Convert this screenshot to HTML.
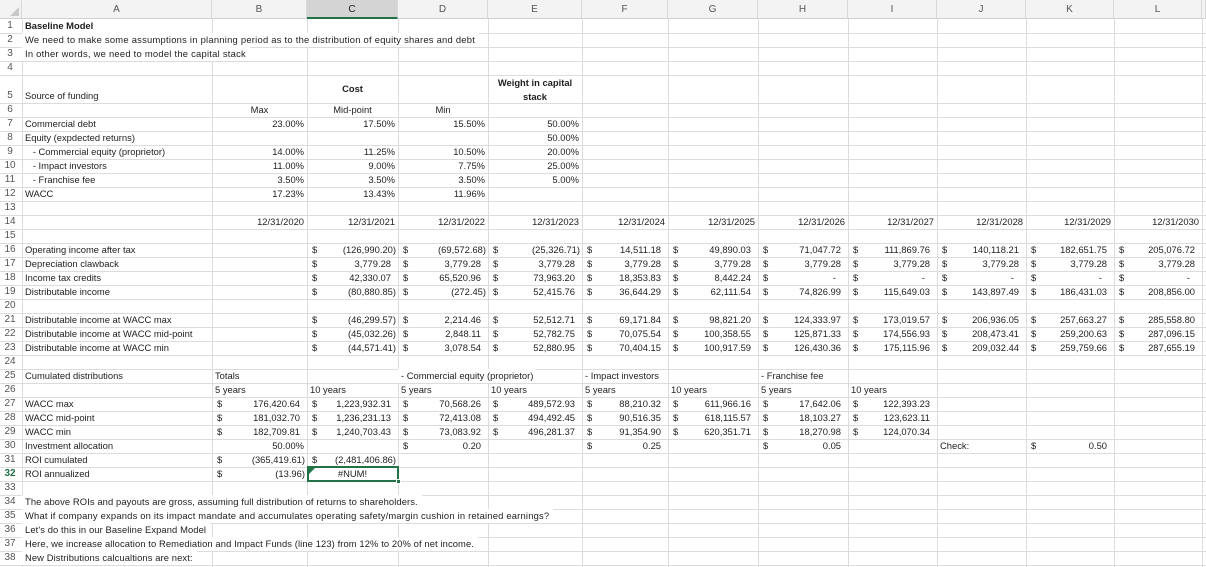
<!DOCTYPE html>
<html><head><meta charset="utf-8">
<style>
*{margin:0;padding:0;box-sizing:border-box}
body{width:1206px;height:567px;overflow:hidden;background:#fff;position:relative;font-family:"Liberation Sans",Arial,sans-serif;font-size:9.4px;color:#1e1e1e}
.h{position:absolute;left:0;width:1206px;height:1px;background:#dcdcdc}
.v{position:absolute;top:19px;height:548px;width:1px;background:#dcdcdc}
.hd{position:absolute;top:0;height:19px;background:#f3f3f3;border-right:1px solid #d8d8d8;border-bottom:1px solid #d0d0d0;text-align:center;line-height:19px;font-size:10px;color:#555}
.rn{position:absolute;left:0;width:20px;text-align:center;height:14px;line-height:14px;font-size:10px;color:#555}
.c{position:absolute;height:14px;line-height:14px;white-space:nowrap}
.A{left:22px;width:190px;padding-left:3px}
.B{left:212px;width:95px}.C{left:307px;width:91px}.D{left:398px;width:90px}.E{left:488px;width:94px}
.F{left:582px;width:86px}.G{left:668px;width:90px}.H{left:758px;width:90px}.I{left:848px;width:89px}
.J{left:937px;width:89px}.K{left:1026px;width:88px}.L{left:1114px;width:88px}
.R{text-align:right;padding-right:3px}
.Ct{text-align:center}
.Lt{padding-left:3px}
.a{text-align:right;padding-right:7px}
.a.n{padding-right:2px}
.a.z{padding-right:12px}
.a s{position:absolute;left:5px;text-decoration:none}
.w{background:#fff}
.r1{top:19px}.r2{top:33px}.r3{top:47px}.r4{top:61px}
.r6{top:103px}.r7{top:117px}.r8{top:131px}.r9{top:145px}.r10{top:159px}.r11{top:173px}.r12{top:187px}
.r14{top:215px}.r16{top:243px}.r17{top:257px}.r18{top:271px}.r19{top:285px}
.r21{top:313px}.r22{top:327px}.r23{top:341px}.r25{top:369px}.r26{top:383px}.r27{top:397px}.r28{top:411px}
.r29{top:425px}.r30{top:439px}.r31{top:453px}.r32{top:467px}.r34{top:495px}.r35{top:509px}.r36{top:523px}.r37{top:537px}.r38{top:551px}
</style></head><body>
<div class="h" style="top:33px"></div><div class="h" style="top:47px"></div><div class="h" style="top:61px"></div><div class="h" style="top:75px"></div><div class="h" style="top:103px"></div>
<div class="h" style="top:117px"></div><div class="h" style="top:131px"></div><div class="h" style="top:145px"></div><div class="h" style="top:159px"></div><div class="h" style="top:173px"></div><div class="h" style="top:187px"></div><div class="h" style="top:201px"></div><div class="h" style="top:215px"></div><div class="h" style="top:229px"></div><div class="h" style="top:243px"></div><div class="h" style="top:257px"></div><div class="h" style="top:271px"></div><div class="h" style="top:285px"></div><div class="h" style="top:299px"></div><div class="h" style="top:313px"></div><div class="h" style="top:327px"></div><div class="h" style="top:341px"></div><div class="h" style="top:355px"></div><div class="h" style="top:369px"></div><div class="h" style="top:383px"></div><div class="h" style="top:397px"></div><div class="h" style="top:411px"></div><div class="h" style="top:425px"></div><div class="h" style="top:439px"></div><div class="h" style="top:453px"></div><div class="h" style="top:467px"></div><div class="h" style="top:481px"></div><div class="h" style="top:495px"></div><div class="h" style="top:509px"></div><div class="h" style="top:523px"></div><div class="h" style="top:537px"></div><div class="h" style="top:551px"></div><div class="h" style="top:565px"></div>
<div class="v" style="left:22px"></div><div class="v" style="left:212px"></div><div class="v" style="left:307px"></div><div class="v" style="left:398px"></div><div class="v" style="left:488px"></div><div class="v" style="left:582px"></div><div class="v" style="left:668px"></div><div class="v" style="left:758px"></div><div class="v" style="left:848px"></div><div class="v" style="left:937px"></div><div class="v" style="left:1026px"></div><div class="v" style="left:1114px"></div><div class="v" style="left:1202px"></div>
<div class="hd" style="left:0;width:22px"><div style="position:absolute;right:2px;bottom:2px;width:0;height:0;border-left:9px solid transparent;border-bottom:9px solid #c8c8c8"></div></div>
<div class="hd" style="left:22px;width:190px">A</div><div class="hd" style="left:212px;width:95px">B</div>
<div class="hd" style="left:307px;width:91px;background:#d4d4d4;border-bottom:2px solid #217346;color:#222">C</div>
<div class="hd" style="left:398px;width:90px">D</div><div class="hd" style="left:488px;width:94px">E</div><div class="hd" style="left:582px;width:86px">F</div><div class="hd" style="left:668px;width:90px">G</div><div class="hd" style="left:758px;width:90px">H</div><div class="hd" style="left:848px;width:89px">I</div><div class="hd" style="left:937px;width:89px">J</div><div class="hd" style="left:1026px;width:88px">K</div><div class="hd" style="left:1114px;width:88px">L</div><div class="hd" style="left:1202px;width:4px"></div>
<div class="rn r1">1</div><div class="rn r2">2</div><div class="rn r3">3</div><div class="rn r4">4</div><div class="rn" style="top:89px">5</div>
<div class="rn r6">6</div><div class="rn r7">7</div><div class="rn r8">8</div><div class="rn r9">9</div><div class="rn r10">10</div><div class="rn r11">11</div><div class="rn r12">12</div><div class="rn" style="top:201px">13</div><div class="rn r14">14</div><div class="rn" style="top:229px">15</div><div class="rn r16">16</div><div class="rn r17">17</div><div class="rn r18">18</div><div class="rn r19">19</div><div class="rn" style="top:299px">20</div><div class="rn r21">21</div><div class="rn r22">22</div><div class="rn r23">23</div><div class="rn" style="top:355px">24</div><div class="rn r25">25</div><div class="rn r26">26</div><div class="rn r27">27</div><div class="rn r28">28</div><div class="rn r29">29</div><div class="rn r30">30</div><div class="rn r31">31</div><div class="rn r32" style="color:#217346;font-weight:bold">32</div><div class="rn" style="top:481px">33</div><div class="rn r34">34</div><div class="rn r35">35</div><div class="rn r36">36</div><div class="rn r37">37</div><div class="rn r38">38</div>
<div class="c A r1" style="font-weight:bold">Baseline Model</div>
<div class="c A r2 w" style="width:auto;padding-right:4px;letter-spacing:0.25px">We need to make some assumptions in planning period as to the distribution of equity shares and debt</div>
<div class="c A r3 w" style="width:auto;padding-right:4px;letter-spacing:0.25px">In other words, we need to model the capital stack</div>
<div class="c A" style="top:89px">Source of funding</div>
<div class="c C Ct" style="top:82px;font-weight:bold">Cost</div>
<div class="c E Ct" style="top:76px;font-weight:bold">Weight in capital</div>
<div class="c E Ct" style="top:90px;font-weight:bold">stack</div>
<div class="c B Ct r6">Max</div><div class="c C Ct r6">Mid-point</div><div class="c D Ct r6">Min</div>
<div class="c A r7">Commercial debt</div><div class="c B R r7">23.00%</div><div class="c C R r7">17.50%</div><div class="c D R r7">15.50%</div><div class="c E R r7">50.00%</div>
<div class="c A r8">Equity (expdected returns)</div><div class="c E R r8">50.00%</div>
<div class="c A r9">&nbsp;&nbsp;&nbsp;- Commercial equity (proprietor)</div><div class="c B R r9">14.00%</div><div class="c C R r9">11.25%</div><div class="c D R r9">10.50%</div><div class="c E R r9">20.00%</div>
<div class="c A r10">&nbsp;&nbsp;&nbsp;- Impact investors</div><div class="c B R r10">11.00%</div><div class="c C R r10">9.00%</div><div class="c D R r10">7.75%</div><div class="c E R r10">25.00%</div>
<div class="c A r11">&nbsp;&nbsp;&nbsp;- Franchise fee</div><div class="c B R r11">3.50%</div><div class="c C R r11">3.50%</div><div class="c D R r11">3.50%</div><div class="c E R r11">5.00%</div>
<div class="c A r12">WACC</div><div class="c B R r12">17.23%</div><div class="c C R r12">13.43%</div><div class="c D R r12">11.96%</div>
<div class="c B R r14">12/31/2020</div><div class="c C R r14">12/31/2021</div><div class="c D R r14">12/31/2022</div><div class="c E R r14">12/31/2023</div><div class="c F R r14">12/31/2024</div><div class="c G R r14">12/31/2025</div><div class="c H R r14">12/31/2026</div><div class="c I R r14">12/31/2027</div><div class="c J R r14">12/31/2028</div><div class="c K R r14">12/31/2029</div><div class="c L R r14">12/31/2030</div>
<div class="c A r16">Operating income after tax</div>
<div class="c C a n r16"><s>$</s>(126,990.20)</div><div class="c D a n r16"><s>$</s>(69,572.68)</div><div class="c E a n r16"><s>$</s>(25,326.71)</div><div class="c F a r16"><s>$</s>14,511.18</div><div class="c G a r16"><s>$</s>49,890.03</div><div class="c H a r16"><s>$</s>71,047.72</div><div class="c I a r16"><s>$</s>111,869.76</div><div class="c J a r16"><s>$</s>140,118.21</div><div class="c K a r16"><s>$</s>182,651.75</div><div class="c L a r16"><s>$</s>205,076.72</div>
<div class="c A r17">Depreciation clawback</div>
<div class="c C a r17"><s>$</s>3,779.28</div><div class="c D a r17"><s>$</s>3,779.28</div><div class="c E a r17"><s>$</s>3,779.28</div><div class="c F a r17"><s>$</s>3,779.28</div><div class="c G a r17"><s>$</s>3,779.28</div><div class="c H a r17"><s>$</s>3,779.28</div><div class="c I a r17"><s>$</s>3,779.28</div><div class="c J a r17"><s>$</s>3,779.28</div><div class="c K a r17"><s>$</s>3,779.28</div><div class="c L a r17"><s>$</s>3,779.28</div>
<div class="c A r18">Income tax credits</div>
<div class="c C a r18"><s>$</s>42,330.07</div><div class="c D a r18"><s>$</s>65,520.96</div><div class="c E a r18"><s>$</s>73,963.20</div><div class="c F a r18"><s>$</s>18,353.83</div><div class="c G a r18"><s>$</s>8,442.24</div><div class="c H a z r18"><s>$</s>-</div><div class="c I a z r18"><s>$</s>-</div><div class="c J a z r18"><s>$</s>-</div><div class="c K a z r18"><s>$</s>-</div><div class="c L a z r18"><s>$</s>-</div>
<div class="c A r19">Distributable income</div>
<div class="c C a n r19"><s>$</s>(80,880.85)</div><div class="c D a n r19"><s>$</s>(272.45)</div><div class="c E a r19"><s>$</s>52,415.76</div><div class="c F a r19"><s>$</s>36,644.29</div><div class="c G a r19"><s>$</s>62,111.54</div><div class="c H a r19"><s>$</s>74,826.99</div><div class="c I a r19"><s>$</s>115,649.03</div><div class="c J a r19"><s>$</s>143,897.49</div><div class="c K a r19"><s>$</s>186,431.03</div><div class="c L a r19"><s>$</s>208,856.00</div>
<div class="c A r21">Distributable income at WACC max</div>
<div class="c C a n r21"><s>$</s>(46,299.57)</div><div class="c D a r21"><s>$</s>2,214.46</div><div class="c E a r21"><s>$</s>52,512.71</div><div class="c F a r21"><s>$</s>69,171.84</div><div class="c G a r21"><s>$</s>98,821.20</div><div class="c H a r21"><s>$</s>124,333.97</div><div class="c I a r21"><s>$</s>173,019.57</div><div class="c J a r21"><s>$</s>206,936.05</div><div class="c K a r21"><s>$</s>257,663.27</div><div class="c L a r21"><s>$</s>285,558.80</div>
<div class="c A r22">Distributable income at WACC mid-point</div>
<div class="c C a n r22"><s>$</s>(45,032.26)</div><div class="c D a r22"><s>$</s>2,848.11</div><div class="c E a r22"><s>$</s>52,782.75</div><div class="c F a r22"><s>$</s>70,075.54</div><div class="c G a r22"><s>$</s>100,358.55</div><div class="c H a r22"><s>$</s>125,871.33</div><div class="c I a r22"><s>$</s>174,556.93</div><div class="c J a r22"><s>$</s>208,473.41</div><div class="c K a r22"><s>$</s>259,200.63</div><div class="c L a r22"><s>$</s>287,096.15</div>
<div class="c A r23">Distributable income at WACC min</div>
<div class="c C a n r23"><s>$</s>(44,571.41)</div><div class="c D a r23"><s>$</s>3,078.54</div><div class="c E a r23"><s>$</s>52,880.95</div><div class="c F a r23"><s>$</s>70,404.15</div><div class="c G a r23"><s>$</s>100,917.59</div><div class="c H a r23"><s>$</s>126,430.36</div><div class="c I a r23"><s>$</s>175,115.96</div><div class="c J a r23"><s>$</s>209,032.44</div><div class="c K a r23"><s>$</s>259,759.66</div><div class="c L a r23"><s>$</s>287,655.19</div>
<div class="c A r25">Cumulated distributions</div><div class="c B Lt r25">Totals</div>
<div class="c D Lt r25 w" style="width:auto;padding-right:3px">- Commercial equity (proprietor)</div>
<div class="c F Lt r25">- Impact investors</div><div class="c H Lt r25">- Franchise fee</div>
<div class="c B Lt r26">5 years</div><div class="c C Lt r26">10 years</div><div class="c D Lt r26">5 years</div><div class="c E Lt r26">10 years</div><div class="c F Lt r26">5 years</div><div class="c G Lt r26">10 years</div><div class="c H Lt r26">5 years</div><div class="c I Lt r26">10 years</div>
<div class="c A r27">WACC max</div>
<div class="c B a r27"><s>$</s>176,420.64</div><div class="c C a r27"><s>$</s>1,223,932.31</div><div class="c D a r27"><s>$</s>70,568.26</div><div class="c E a r27"><s>$</s>489,572.93</div><div class="c F a r27"><s>$</s>88,210.32</div><div class="c G a r27"><s>$</s>611,966.16</div><div class="c H a r27"><s>$</s>17,642.06</div><div class="c I a r27"><s>$</s>122,393.23</div>
<div class="c A r28">WACC mid-point</div>
<div class="c B a r28"><s>$</s>181,032.70</div><div class="c C a r28"><s>$</s>1,236,231.13</div><div class="c D a r28"><s>$</s>72,413.08</div><div class="c E a r28"><s>$</s>494,492.45</div><div class="c F a r28"><s>$</s>90,516.35</div><div class="c G a r28"><s>$</s>618,115.57</div><div class="c H a r28"><s>$</s>18,103.27</div><div class="c I a r28"><s>$</s>123,623.11</div>
<div class="c A r29">WACC min</div>
<div class="c B a r29"><s>$</s>182,709.81</div><div class="c C a r29"><s>$</s>1,240,703.43</div><div class="c D a r29"><s>$</s>73,083.92</div><div class="c E a r29"><s>$</s>496,281.37</div><div class="c F a r29"><s>$</s>91,354.90</div><div class="c G a r29"><s>$</s>620,351.71</div><div class="c H a r29"><s>$</s>18,270.98</div><div class="c I a r29"><s>$</s>124,070.34</div>
<div class="c A r30">Investment allocation</div><div class="c B R r30">50.00%</div>
<div class="c D a r30"><s>$</s>0.20</div><div class="c F a r30"><s>$</s>0.25</div><div class="c H a r30"><s>$</s>0.05</div>
<div class="c J Lt r30">Check:</div><div class="c K a r30"><s>$</s>0.50</div>
<div class="c A r31">ROI cumulated</div>
<div class="c B a n r31"><s>$</s>(365,419.61)</div><div class="c C a n r31"><s>$</s>(2,481,406.86)</div>
<div class="c A r32">ROI annualized</div>
<div class="c B a n r32"><s>$</s>(13.96)</div>
<div class="c C Ct r32">#NUM!</div>
<div style="position:absolute;left:307px;top:466px;width:92px;height:16px;border:2px solid #217346"></div>
<div style="position:absolute;left:396px;top:479px;width:5px;height:5px;background:#217346;border:1px solid #fff"></div>
<div style="position:absolute;left:309px;top:468px;width:0;height:0;border-top:6px solid #217346;border-right:6px solid transparent"></div>
<div class="c A r34 w" style="width:auto;padding-right:4px;letter-spacing:0.1px">The above ROIs and payouts are gross, assuming full distribution of returns to shareholders.</div>
<div class="c A r35 w" style="width:auto;padding-right:4px;letter-spacing:0.2px">What if company expands on its impact mandate and accumulates operating safety/margin cushion in retained earnings?</div>
<div class="c A r36 w" style="width:auto;padding-right:4px;letter-spacing:0.1px">Let's do this in our Baseline Expand Model</div>
<div class="c A r37 w" style="width:auto;padding-right:4px;letter-spacing:0.1px">Here, we increase allocation to Remediation and Impact Funds (line 123) from 12% to 20% of net income.</div>
<div class="c A r38 w" style="width:auto;padding-right:4px;letter-spacing:0.1px">New Distributions calcualtions are next:</div>
</body></html>
